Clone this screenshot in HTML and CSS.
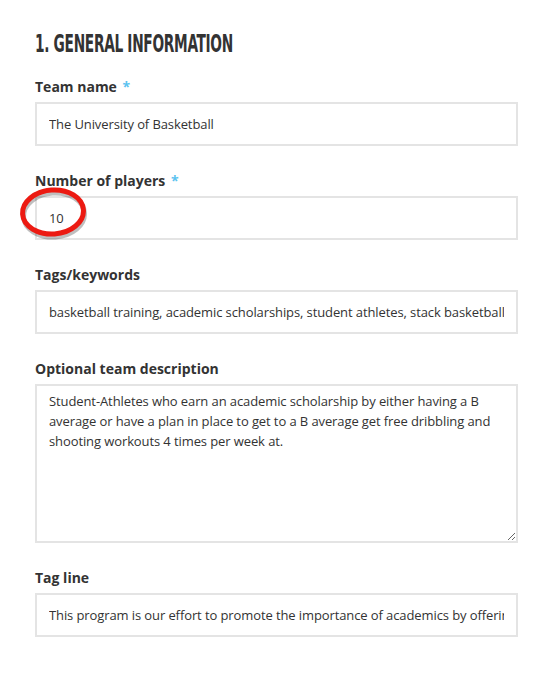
FILE: index.html
```html
<!DOCTYPE html>
<html lang="en">
<head>
<meta charset="utf-8">
<title>General information</title>
<link rel="stylesheet" href="styles.css">
</head>
<body>
<form class="form">
  <h2 class="section-title"><span class="section-title-text">1. General Information</span></h2>

  <div class="field">
    <label class="field-label" for="team">Team name <span class="req">*</span></label>
    <input class="text-input" id="team" type="text" value="The University of Basketball">
  </div>

  <div class="field field-marked">
    <label class="field-label" for="players">Number of players <span class="req">*</span></label>
    <div class="input-wrap">
      <input class="text-input" id="players" type="text" value="10">
      <svg class="mark" width="80" height="66" viewBox="0 0 80 66" aria-hidden="true">
        <ellipse cx="39" cy="35" rx="30.5" ry="22" fill="none" stroke="rgba(0,0,0,0.25)" stroke-width="5" transform="rotate(-4 39 35)"/>
        <ellipse cx="38" cy="32" rx="30.5" ry="22" fill="none" stroke="#ec1a12" stroke-width="5" transform="rotate(-4 38 32)"/>
      </svg>
    </div>
  </div>

  <div class="field">
    <label class="field-label" for="tags">Tags/keywords</label>
    <input class="text-input" id="tags" type="text" value="basketball training, academic scholarships, student athletes, stack basketball">
  </div>

  <div class="field">
    <label class="field-label" for="desc">Optional team description</label>
    <textarea class="text-area" id="desc">Student-Athletes who earn an academic scholarship by either having a B average or have a plan in place to get to a B average get free dribbling and shooting workouts 4 times per week at.</textarea>
  </div>

  <div class="field">
    <label class="field-label" for="tagline">Tag line</label>
    <input class="text-input" id="tagline" type="text" value="This program is our effort to promote the importance of academics by offering">
  </div>
</form>
</body>
</html>
```

FILE: styles.css
```css
html, body {
  margin: 0;
  padding: 0;
  background: #ffffff;
}

.form {
  width: 483px;
  padding: 29px 0 0 35px;
  font-family: "Open Sans", "Liberation Sans", sans-serif;
  color: #333333;
}

.section-title {
  margin: 0 0 18px 0;
  height: 30px;
  font-family: "DejaVu Sans Condensed", "DejaVu Sans", sans-serif;
  font-stretch: condensed;
  font-weight: bold;
  font-size: 25px;
  line-height: 30px;
  text-transform: uppercase;
  color: #333333;
  letter-spacing: -0.5px;
}

.section-title-text {
  display: inline-block;
  transform: scaleX(0.61);
  transform-origin: left center;
  white-space: nowrap;
}

.field {
  margin-bottom: 25px;
}

.field-label {
  display: block;
  font-size: 14px;
  font-weight: bold;
  line-height: 20px;
  margin-bottom: 5px;
  color: #333333;
}

.req {
  color: #5cc3f0;
  margin-left: 2px;
}

.input-wrap {
  position: relative;
}

.text-input,
.text-area {
  display: block;
  box-sizing: border-box;
  width: 483px;
  margin: 0;
  border: 2px solid #e4e4e4;
  border-radius: 0;
  background: #ffffff;
  font-family: "Open Sans", "Liberation Sans", sans-serif;
  font-size: 13px;
  letter-spacing: -0.1px;
  color: #333333;
  outline: none;
}

.text-input {
  height: 44px;
  padding: 0 12px;
}

.text-area {
  height: 159px;
  padding: 5px 12px;
  line-height: 20px;
  resize: vertical;
}

.mark {
  position: absolute;
  left: -20px;
  top: -16px;
  overflow: visible;
  pointer-events: none;
}
```
